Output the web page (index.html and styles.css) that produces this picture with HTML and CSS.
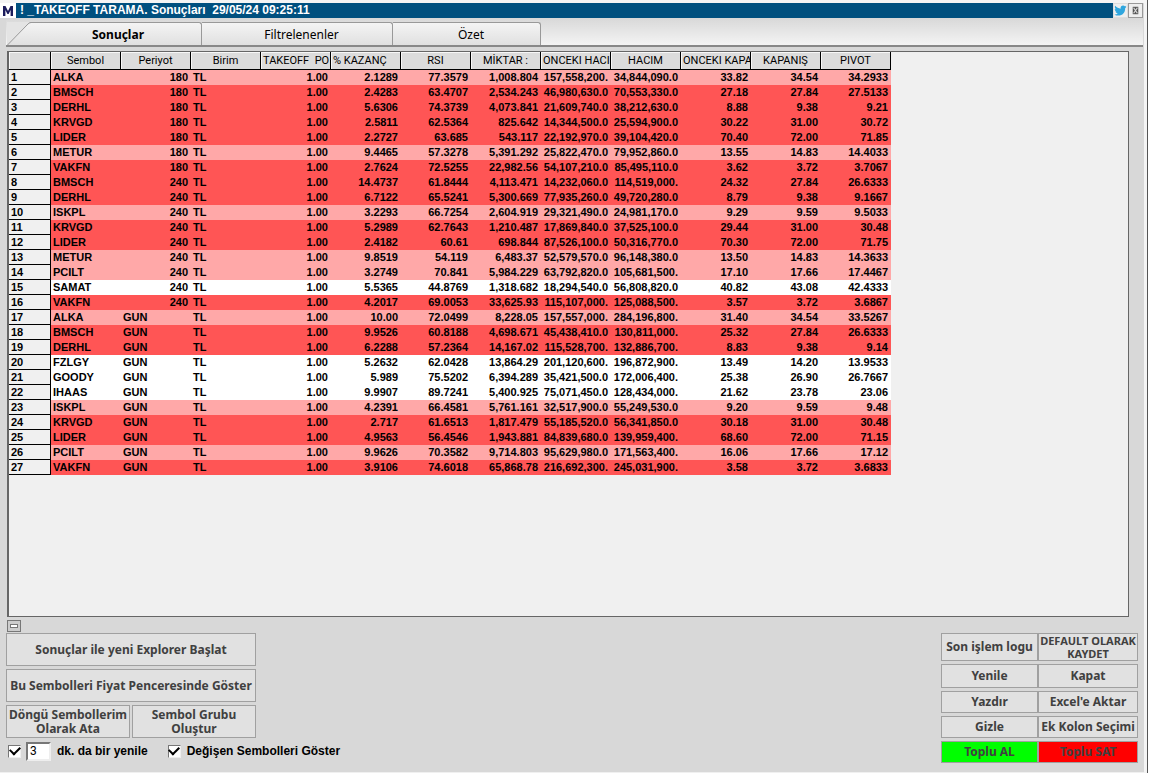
FILE: index.html
```
<!DOCTYPE html>
<html lang="tr">
<head>
<meta charset="utf-8">
<title>TAKEOFF TARAMA</title>
<link rel="stylesheet" href="styles.css">
</head>
<body>
<main class="window">
  <header class="titlebar">
    <svg class="logo" viewBox="0 0 16 15"><rect width="16" height="15" fill="#fff"/><path d="M3 13V3H5.500L8 8L10.500 3H13V13H10.600V7L8.600 11H7.400L5.400 7V13Z" fill="#1c1c5c"/></svg>
    <h1>! _TAKEOFF TARAMA. Sonuçları&nbsp; 29/05/24 09:25:11</h1>
    <button class="tool bird" aria-label="Twitter"><svg viewBox="0 0 14 14"><path d="M13.500 3l-1.500 1.500C12.200 9 9 12.500 4.800 12.500 3 12.500 1.500 12 .5 11.200c1.500.1 2.600-.3 3.500-1C2.700 10 1.900 9.200 1.600 8.200h1.200C1.500 7.700.8 6.600.8 5.300l1.200.4C.8 4.600.6 3.200 1.300 2 3 4 4.900 5 7.100 5 6.800 2.700 8.300 1.500 9.700 1.500c.9 0 1.500.3 2 .9l1.500-.6-.8 1.400z" fill="#2fa6de"/></svg></button>
    <button class="tool" aria-label="Kapat"><svg viewBox="0 0 14 14"><rect x="4" y="3" width="6" height="8" fill="#555"/><path d="M5 4l4 6M9 4l-4 6" stroke="#ddd" stroke-width="1.200"/></svg></button>
  </header>
  <nav class="tabs">
    <button class="tab first active"><svg class="slant" viewBox="0 0 24 23"><path d="M0 0H24L22 1L1 23H0Z" fill="#e4e4e4"/><path d="M0.500 23L20 3Q22 .5 24 .5" fill="none" stroke="#999"/></svg>Sonuçlar</button>
    <button class="tab second">Filtrelenenler</button>
    <button class="tab third">Özet</button>
  </nav>
  <section class="grid-frame">
    <table class="grid">
      <thead><tr><th></th><th>Sembol</th><th>Periyot</th><th>Birim</th><th class="long">TAKEOFF&nbsp; PO</th><th class="long">% KAZANÇ</th><th>RSI</th><th>MİKTAR :</th><th class="long">ONCEKI HACI</th><th>HACIM</th><th class="long">ONCEKI KAPA</th><th>KAPANIŞ</th><th>PIVOT</th></tr></thead>
      <tbody class="minutes">
        <tr class="warm"><th>1<td>ALKA<td>180<td>TL<td>1.00<td>2.1289<td>77.3579<td>1,008.804<td>157,558,200.<td>34,844,090.0<td>33.82<td>34.54<td>34.2933
        <tr class="hot"><th>2<td>BMSCH<td>180<td>TL<td>1.00<td>2.4283<td>63.4707<td>2,534.243<td>46,980,630.0<td>70,553,330.0<td>27.18<td>27.84<td>27.5133
        <tr class="hot"><th>3<td>DERHL<td>180<td>TL<td>1.00<td>5.6306<td>74.3739<td>4,073.841<td>21,609,740.0<td>38,212,630.0<td>8.88<td>9.38<td>9.21
        <tr class="hot"><th>4<td>KRVGD<td>180<td>TL<td>1.00<td>2.5811<td>62.5364<td>825.642<td>14,344,500.0<td>25,594,900.0<td>30.22<td>31.00<td>30.72
        <tr class="hot"><th>5<td>LIDER<td>180<td>TL<td>1.00<td>2.2727<td>63.685<td>543.117<td>22,192,970.0<td>39,104,420.0<td>70.40<td>72.00<td>71.85
        <tr class="warm"><th>6<td>METUR<td>180<td>TL<td>1.00<td>9.4465<td>57.3278<td>5,391.292<td>25,822,470.0<td>79,952,860.0<td>13.55<td>14.83<td>14.4033
        <tr class="hot"><th>7<td>VAKFN<td>180<td>TL<td>1.00<td>2.7624<td>72.5255<td>22,982.56<td>54,107,210.0<td>85,495,110.0<td>3.62<td>3.72<td>3.7067
        <tr class="hot"><th>8<td>BMSCH<td>240<td>TL<td>1.00<td>14.4737<td>61.8444<td>4,113.471<td>14,232,060.0<td>114,519,000.<td>24.32<td>27.84<td>26.6333
        <tr class="hot"><th>9<td>DERHL<td>240<td>TL<td>1.00<td>6.7122<td>65.5241<td>5,300.669<td>77,935,260.0<td>49,720,280.0<td>8.79<td>9.38<td>9.1667
        <tr class="warm"><th>10<td>ISKPL<td>240<td>TL<td>1.00<td>3.2293<td>66.7254<td>2,604.919<td>29,321,490.0<td>24,981,170.0<td>9.29<td>9.59<td>9.5033
        <tr class="hot"><th>11<td>KRVGD<td>240<td>TL<td>1.00<td>5.2989<td>62.7643<td>1,210.487<td>17,869,840.0<td>37,525,100.0<td>29.44<td>31.00<td>30.48
        <tr class="hot"><th>12<td>LIDER<td>240<td>TL<td>1.00<td>2.4182<td>60.61<td>698.844<td>87,526,100.0<td>50,316,770.0<td>70.30<td>72.00<td>71.75
        <tr class="warm"><th>13<td>METUR<td>240<td>TL<td>1.00<td>9.8519<td>54.119<td>6,483.37<td>52,579,570.0<td>96,148,380.0<td>13.50<td>14.83<td>14.3633
        <tr class="warm"><th>14<td>PCILT<td>240<td>TL<td>1.00<td>3.2749<td>70.841<td>5,984.229<td>63,792,820.0<td>105,681,500.<td>17.10<td>17.66<td>17.4467
        <tr><th>15<td>SAMAT<td>240<td>TL<td>1.00<td>5.5365<td>44.8769<td>1,318.682<td>18,294,540.0<td>56,808,820.0<td>40.82<td>43.08<td>42.4333
        <tr class="hot"><th>16<td>VAKFN<td>240<td>TL<td>1.00<td>4.2017<td>69.0053<td>33,625.93<td>115,107,000.<td>125,088,500.<td>3.57<td>3.72<td>3.6867
      </tbody>
      <tbody class="days">
        <tr class="warm"><th>17<td>ALKA<td>GUN<td>TL<td>1.00<td>10.00<td>72.0499<td>8,228.05<td>157,557,000.<td>284,196,800.<td>31.40<td>34.54<td>33.5267
        <tr class="hot"><th>18<td>BMSCH<td>GUN<td>TL<td>1.00<td>9.9526<td>60.8188<td>4,698.671<td>45,438,410.0<td>130,811,000.<td>25.32<td>27.84<td>26.6333
        <tr class="hot"><th>19<td>DERHL<td>GUN<td>TL<td>1.00<td>6.2288<td>57.2364<td>14,167.02<td>115,528,700.<td>132,886,700.<td>8.83<td>9.38<td>9.14
        <tr><th>20<td>FZLGY<td>GUN<td>TL<td>1.00<td>5.2632<td>62.0428<td>13,864.29<td>201,120,600.<td>196,872,900.<td>13.49<td>14.20<td>13.9533
        <tr><th>21<td>GOODY<td>GUN<td>TL<td>1.00<td>5.989<td>75.5202<td>6,394.289<td>35,421,500.0<td>172,006,400.<td>25.38<td>26.90<td>26.7667
        <tr><th>22<td>IHAAS<td>GUN<td>TL<td>1.00<td>9.9907<td>89.7241<td>5,400.925<td>75,071,450.0<td>128,434,000.<td>21.62<td>23.78<td>23.06
        <tr class="warm"><th>23<td>ISKPL<td>GUN<td>TL<td>1.00<td>4.2391<td>66.4581<td>5,761.161<td>32,517,900.0<td>55,249,530.0<td>9.20<td>9.59<td>9.48
        <tr class="hot"><th>24<td>KRVGD<td>GUN<td>TL<td>1.00<td>2.717<td>61.6513<td>1,817.479<td>55,185,520.0<td>56,341,850.0<td>30.18<td>31.00<td>30.48
        <tr class="hot"><th>25<td>LIDER<td>GUN<td>TL<td>1.00<td>4.9563<td>56.4546<td>1,943.881<td>84,839,680.0<td>139,959,400.<td>68.60<td>72.00<td>71.15
        <tr class="warm"><th>26<td>PCILT<td>GUN<td>TL<td>1.00<td>9.9626<td>70.3582<td>9,714.803<td>95,629,980.0<td>171,563,400.<td>16.06<td>17.66<td>17.12
        <tr class="hot"><th>27<td>VAKFN<td>GUN<td>TL<td>1.00<td>3.9106<td>74.6018<td>65,868.78<td>216,692,300.<td>245,031,900.<td>3.58<td>3.72<td>3.6833
      </tbody>
    </table>
  </section>
  <button class="collapse" aria-label="Daralt"><span></span></button>
  <footer class="panel">
    <div class="left">
      <button class="btn tall">Sonuçlar ile yeni Explorer Başlat</button>
      <button class="btn tall">Bu Sembolleri Fiyat Penceresinde Göster</button>
      <div class="pair">
        <button class="btn">Döngü Sembollerim<br>Olarak Ata</button>
        <button class="btn">Sembol Grubu<br>Oluştur</button>
      </div>
      <div class="options">
        <input class="check" type="checkbox" id="auto" checked>
        <input class="minutes-box" type="text" id="mins" value="3" aria-label="Dakika">
        <label class="auto-label" for="auto">dk. da bir yenile</label>
        <input class="check" type="checkbox" id="changed" checked>
        <label for="changed">Değişen Sembolleri Göster</label>
      </div>
    </div>
    <div class="right">
      <button class="btn">Son işlem logu</button><button class="btn small">DEFAULT OLARAK<br>KAYDET</button>
      <button class="btn">Yenile</button><button class="btn">Kapat</button>
      <button class="btn">Yazdır</button><button class="btn">Excel'e Aktar</button>
      <button class="btn">Gizle</button><button class="btn">Ek Kolon Seçimi</button>
      <button class="btn buy">Toplu AL</button><button class="btn sell">Toplu SAT</button>
    </div>
  </footer>
</main>
</body>
</html>
```
FILE: styles.css
```
* { box-sizing: border-box; }
body { margin: 0; background: #fff; font-family: "Liberation Sans", Arial, sans-serif; }
button { font: inherit; color: inherit; padding: 0; margin: 0; cursor: default; }
.window {
  display: flex; flex-direction: column; min-height: 100vh; margin-right: 1px;
  padding: 3px 4px 1px 0; background: #d8d8d8;
  border-right: 1px solid #555; box-shadow: inset 0 3px #f4f4f4, inset -3px 0 #f4f4f4, inset 0 -1px #f0f0f0;
}
.titlebar { display: flex; height: 15px; background: #00507f; color: #fff; }
.logo { width: 16px; height: 15px; margin-right: 4px; }
.titlebar h1 { flex: 1; margin: 0; font-size: 12px; line-height: 15px; font-weight: bold; white-space: pre; }
.tool { width: 15px; height: 15px; background: #eee; border: 1px solid #999; display: flex; }
.tool svg { width: 100%; height: 100%; }
.bird { border-color: #ddd; }
.tabs {
  display: flex; height: 29px; margin-left: 6px; padding: 4px 0 0 1px;
  background: linear-gradient(#d8d8d8, #f4f4f4); border-bottom: 2px solid #888;
  font-family: "Noto Sans", sans-serif; font-size: 12px;
}
.tab {
  border: 1px solid #999; border-bottom: 0; border-left: 0; border-radius: 0 3px 0 0;
  background: linear-gradient(#f4f4f4, #e0e0e0); height: 23px;
}
.first { position: relative; width: 195px; padding-left: 28px; font-weight: bold; }
.slant { position: absolute; left: 0; top: -1px; width: 24px; height: 23px; }
.second { width: 191px; padding-left: 9px; }
.third { width: 148px; padding-left: 9px; }
.grid-frame {
  flex: 1; margin: 4px 14px 0 7px; background: #f0f0f0;
  border: 1px solid #666; border-left-width: 2px;
}
.grid { table-layout: fixed; width: 882px; border-collapse: separate; border-spacing: 0; font-size: 11px; }
.grid th, .grid td { padding: 0 3px 0 2px; overflow: hidden; white-space: nowrap; }
.grid thead th {
  height: 18px; width: 70px; padding: 0; font-family: Roboto, sans-serif; font-size: 11px; font-weight: normal; line-height: 17px;
  background: #dcdcdc; border-right: 1px solid #000; border-bottom: 1px solid #000; box-shadow: inset 1px 1px #f8f8f8;
}
.grid thead th:first-child { width: 42px; }
.grid thead .long { padding-left: 2px; text-align: left; }
.grid tbody th { height: 15px; line-height: 14px; text-align: left; background: #f0f0f0; border-right: 1px solid #000; border-bottom: 1px solid #000; }
.grid td { height: 15px; line-height: 15px; text-align: right; font-weight: bold; background: #fff; }
.grid td:nth-child(2), .grid td:nth-child(4), .days td:nth-child(3) { text-align: left; }
.grid .warm td { background: #ffa8a8; }
.grid .hot td { background: #ff5555; }
.collapse { width: 14px; height: 12px; margin: 3px 0 1px 7px; background: #ccc; border: 1px solid #777; display: flex; align-items: center; justify-content: center; }
.collapse span { width: 8px; height: 4px; background: #fff; border: 1px solid #777; }
.panel { display: flex; justify-content: space-between; padding: 0 5px 9px 6px; height: 139px; }
.btn { background: #e1e1e1; border: 1px solid #a0a0a0; color: #404040; font: bold 12px/14px "Noto Sans", sans-serif; white-space: nowrap; }
.left { width: 250px; display: flex; flex-direction: column; gap: 3px; }
.tall { height: 33px; }
.pair { display: grid; grid-template-columns: 1fr 1fr; gap: 2px; }
.pair .btn { height: 33px; }
.options { display: flex; align-items: center; height: 20px; padding-left: 2px; white-space: nowrap; font-size: 12px; font-weight: bold; }
.check { appearance: none; width: 13px; height: 13px; margin: 0; flex: none; background: #fff; border: 1px solid; border-color: #777 #eee #eee #777; display: grid; place-items: center; }
.check:checked::before { content: ""; width: 8px; height: 5px; margin-bottom: 3px; border: solid #000; border-width: 0 0 2px 2px; rotate: -45deg; }
.minutes-box { width: 25px; height: 19px; margin: 0 6px 0 5px; padding: 0 2px; flex: none; border: 2px solid; border-color: #777 #eee #eee #777; font: 12px Roboto, sans-serif; }
.auto-label { margin-right: 20px; }
.check + label { margin-left: 6px; }
.right { display: grid; grid-template-columns: 97px 100px; grid-template-rows: 28px 24px 22px 22px 22px; row-gap: 3px; }
.small { font-size: 11px; line-height: 13px; }
.buy { background: #0f0; }
.sell { background: #f00; }
```
